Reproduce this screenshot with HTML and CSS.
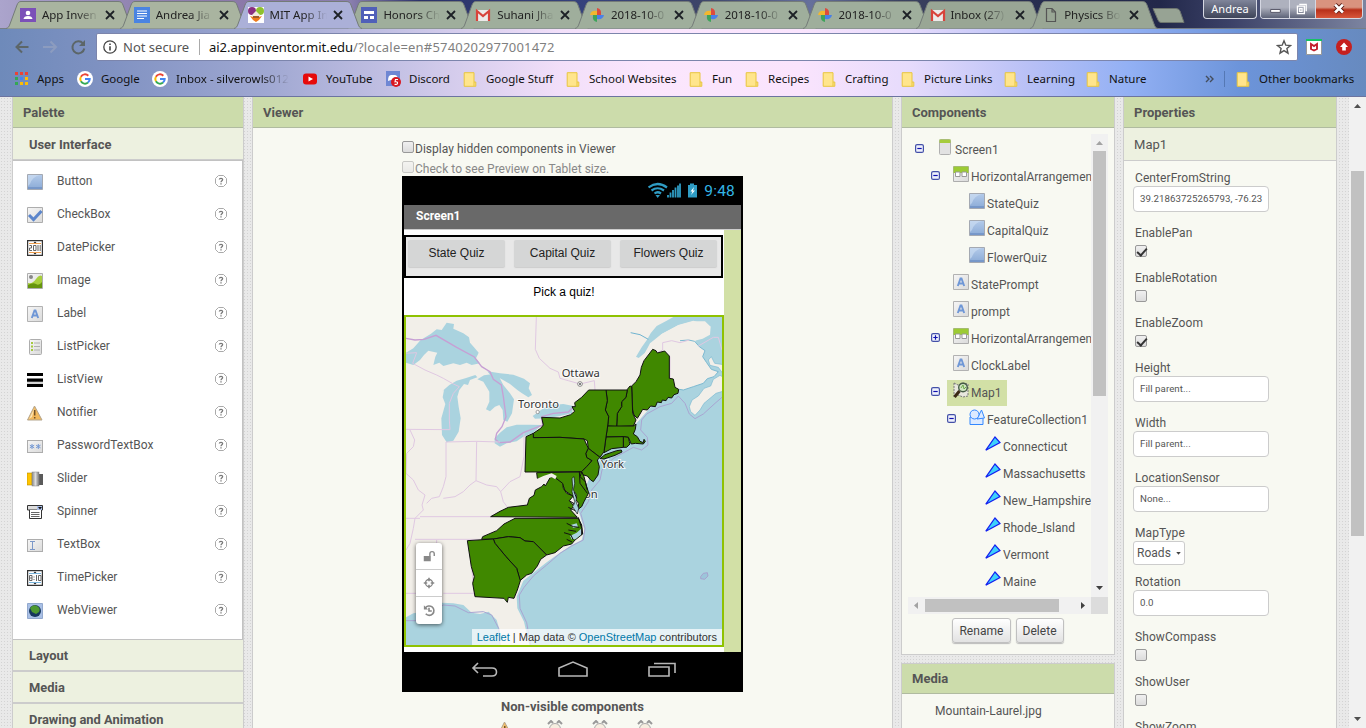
FILE: index.html
```html
<!DOCTYPE html>
<html lang="en">
<head>
<meta charset="utf-8">
<title>MIT App Inventor</title>
<link rel="stylesheet" href="styles.css">
</head>
<body>
<svg class="defs" width="0" height="0">
  <defs>
    <linearGradient id="gBlue" x1="0" y1="0" x2="0" y2="1"><stop offset="0" stop-color="#b4cbea"/><stop offset="1" stop-color="#8aaad6"/></linearGradient>
    <linearGradient id="gGray" x1="0" y1="0" x2="1" y2="1"><stop offset="0" stop-color="#f6f6f6"/><stop offset="1" stop-color="#dadada"/></linearGradient>
    <linearGradient id="gSteel"><stop offset="0" stop-color="#888"/><stop offset=".5" stop-color="#ddd"/><stop offset="1" stop-color="#777"/></linearGradient>
  </defs>
  <symbol id="tab" viewBox="0 0 128 28"><path d="M0 27.5C2 27 3 26 4 23L11 4C12 1.500 13 .5 15 .5H112C115 .5 116 1.500 117 4L124 23C125 26 126 27 128 27.500Z" fill="currentColor"/><path d="M0 27.5C2 27 3 26 4 23L11 4C12 1.500 13 .5 15 .5H112C115 .5 116 1.500 117 4L124 23C125 26 126 27 128 27.500" fill="none" stroke="#747b78"/></symbol>
  <symbol id="x" viewBox="0 0 10 10"><path d="M1 1L9 9M9 1L1 9" stroke="#1d2126" stroke-width="1.800" fill="none"/></symbol>
  <symbol id="gmail" viewBox="0 0 16 16"><path d="M1 3H15V14H1Z" fill="#eceaea"/><path d="M2 14V4L8 9L14 4V14" fill="none" stroke="#d8433b" stroke-width="2.200"/></symbol>
  <symbol id="photos" viewBox="0 0 16 16"><path d="M8 8V1Q13 2 12 8Z" fill="#dc4b3e"/><path d="M8 8H15Q14 13 8 12Z" fill="#4a80e8"/><path d="M8 8V15Q3 14 4 8Z" fill="#3fa35b"/><path d="M8 8H1Q2 3 8 4Z" fill="#f3b72f"/></symbol>
  <symbol id="google" viewBox="0 0 16 16"><circle cx="8" cy="8" r="8" fill="#fff"/><path d="M11.300 4.700A4.700 4.700 0 0 0 3.900 5.700" stroke="#ea4335" stroke-width="2" fill="none"/><path d="M3.900 5.700A4.700 4.700 0 0 0 3.900 10.300" stroke="#fbbc05" stroke-width="2" fill="none"/><path d="M3.900 10.300A4.700 4.700 0 0 0 11 11.600" stroke="#34a853" stroke-width="2" fill="none"/><path d="M11 11.600A4.700 4.700 0 0 0 12.700 8H8" stroke="#4285f4" stroke-width="2" fill="none"/></symbol>
  <symbol id="folder" viewBox="0 0 13 15"><path d="M.7.7H10.500V10H12.300V14.300H.7Z" fill="#ffe58c" stroke="#e8c63f"/><path d="M10.500 10V14" stroke="#e8c63f"/></symbol>
  <symbol id="help" viewBox="0 0 12 12"><path d="M3.500.5H8.500L11.500 3.500V8.500L8.500 11.500H3.500L.5 8.500V3.500Z" fill="#fff" stroke="#aaa"/><path d="M4.300 4.500C4.500 2.800 7.800 2.900 7.600 4.700C7.500 5.700 6 5.800 6 7.200M6 8.200V9.500" fill="none" stroke="#777" stroke-width="1.300"/></symbol>
  <symbol id="button" viewBox="0 0 16 16"><path d="M.5.5H15.500V15.500H.5Z" fill="url(#gBlue)" stroke="#a4a9b2"/><path d="M1 1H13Q5 3 3 10L1 12Z" fill="#cfdff3" opacity=".6"/><path d="M1 14H15" stroke="#6f90c4" stroke-width="1.500"/></symbol>
  <symbol id="checkbox" viewBox="0 0 16 16"><path d="M.5.5H15.500V15.500H.5Z" fill="url(#gGray)" stroke="#adadad"/><path d="M2 8L6.500 12.500L14.500 4" fill="none" stroke="#5b85cb" stroke-width="3"/></symbol>
  <symbol id="datepicker" viewBox="0 0 16 16"><path d="M.6.6H15.400V15.400H.6Z" fill="#fff" stroke="#333" stroke-width="1.200"/><path d="M2 3.500H14M2 12.500H14" stroke="#f0a050"/><path d="M6.500 3L8 1.500L9.500 3ZM6.500 13L8 14.500L9.500 13Z" fill="#222"/><path d="M2.500 5.500H4.500V8H2.500V10.500H5M6.500 5.500H9V10.500H6.500ZM11 5V11M13.200 5V11" fill="none" stroke="#666"/></symbol>
  <symbol id="timepicker" viewBox="0 0 16 16"><path d="M.6.6H15.400V15.400H.6Z" fill="#fff" stroke="#333" stroke-width="1.200"/><path d="M2 3.500H14M2 12.500H14" stroke="#79b4dc"/><path d="M6.500 3L8 1.500L9.500 3ZM6.500 13L8 14.500L9.500 13Z" fill="#222"/><path d="M2.500 5.500H5V10.500H2.500ZM2.500 8H5M7 6.500V7.500M7 9V10M9.500 5V11M11.500 5.500H14V10.500H11.500Z" fill="none" stroke="#666"/></symbol>
  <symbol id="image" viewBox="0 0 16 16"><path d="M.5.5H15.500V15.500H.5Z" fill="url(#gGray)" stroke="#adadad"/><path d="M1 10Q6 11 9 6T15 3V15H1Z" fill="#a8cf3d"/><path d="M1 12Q6 9 9 11T15 9V15H1Z" fill="#66950e"/><circle cx="4" cy="4" r="2" fill="#888"/></symbol>
  <symbol id="label" viewBox="0 0 16 16"><path d="M.5.5H15.500V15.500H.5Z" fill="url(#gGray)" stroke="#b2b2b2"/><path d="M4.800 12L7.500 4.500H8.500L11.200 12M6 9.500H10" fill="none" stroke="#6f97d6" stroke-width="1.900"/></symbol>
  <symbol id="listpicker" viewBox="0 0 16 16"><rect x="2.500" y=".5" width="12" height="15" rx="1" fill="url(#gGray)" stroke="#adadad"/><path d="M4 4H6M4 7.500H6M4 11H6" stroke="#a5c840" stroke-width="2"/><path d="M7 4H13M7 7.500H13M7 11H13" stroke="#b0b0b0"/></symbol>
  <symbol id="listview" viewBox="0 0 16 16"><path d="M0 2.500H16M0 8.200H16M0 13.500H16" stroke="#000" stroke-width="3.200"/><path d="M0 11H16" stroke="#aaa"/></symbol>
  <symbol id="notifier" viewBox="0 0 16 16"><path d="M7.500 1L15 15H.5Z" fill="#f2b95d" stroke="#b4a58d"/><path d="M7.500 3L5 12L2 14Z" fill="#fce5b5"/><path d="M7.700 5V10.500M7.700 12V13.500" stroke="#715126" stroke-width="1.500"/></symbol>
  <symbol id="password" viewBox="0 0 16 16"><rect x=".5" y="2.500" width="15" height="12" fill="url(#gGray)" stroke="#adadad"/><path d="M5 6V11M2.800 7.200L7.200 9.800M7.200 7.200L2.800 9.800M11.300 6V11M9.100 7.200L13.500 9.800M13.500 7.200L9.100 9.800" stroke="#7398d4"/></symbol>
  <symbol id="slider" viewBox="0 0 16 16"><path d="M0 2H5V14H0Z" fill="#ffc400" stroke="#b38a00" stroke-width=".6"/><path d="M11 3H16V14H11Z" fill="#5a5a5a"/><rect x="5" y="1" width="7" height="14" fill="url(#gSteel)" stroke="#888" stroke-width=".5"/></symbol>
  <symbol id="spinner" viewBox="0 0 16 16"><path d="M.5 1.500H15.500V6H.5Z" fill="#ddd" stroke="#333"/><path d="M10 2H15V6H10Z" fill="#a9bde6"/><path d="M11 3H15L13 5.500Z" fill="#111"/><path d="M2.500 6V14.500H14.500V6" fill="#fff" stroke="#333"/><path d="M4 8.500H12.500M4 10.500H12.500M4 12.500H12.500" stroke="#666"/></symbol>
  <symbol id="textbox" viewBox="0 0 16 16"><rect x=".5" y="2.500" width="15" height="12" fill="url(#gGray)" stroke="#adadad"/><path d="M3 4.500H8M3 12.500H8M5.500 4.500V12.500" stroke="#7c98c8" fill="none"/></symbol>
  <symbol id="web" viewBox="0 0 16 16"><path d="M.5.5H15.500V15.500H.5Z" fill="#a9c0e6" stroke="#93a9ce"/><circle cx="8" cy="8" r="6" fill="#17365e"/><path d="M3 5Q6 1 10 3Q14 5 12 9L9 11L5 9Z" fill="#4e9a31"/></symbol>
  <symbol id="screen" viewBox="0 0 16 16"><rect x="2.500" y=".5" width="11" height="15" rx="1" fill="#e2e2e2" stroke="#b0b0b0"/><path d="M2.500.5H13.500V4H2.500Z" fill="#a5cc3c"/></symbol>
  <symbol id="horiz" viewBox="0 0 16 16"><path d="M.5.5H15.500V15.500H.5Z" fill="url(#gGray)" stroke="#adadad"/><path d="M.5.5H15.500V7H.5Z" fill="#9ccb34"/><path d="M2.500 6H7V10.500H2.500ZM9 6H13.500V10.500H9Z" fill="#fff" stroke="#999"/></symbol>
  <symbol id="map" viewBox="0 0 16 16"><path d="M1 1L5 3L10 1L15 2V14L10 15L5 13L1 15Z" fill="#e8e8de" stroke="#777" stroke-dasharray="2 1"/><circle cx="10" cy="5.500" r="4.300" fill="#cfe5c0" stroke="#455b45" stroke-width="1.400"/><path d="M6.500 9L1.500 15" stroke="#3b2a14" stroke-width="3"/><path d="M8 6L10 3L11 7L13 5" fill="none" stroke="#6daa4a"/></symbol>
  <symbol id="features" viewBox="0 0 16 16"><path d="M1 8H14V15.500H1Z" fill="#dceaff" stroke="#3388ff"/><path d="M8 10L12.500 1L15.500 9Z" fill="#dceaff" stroke="#3388ff"/><circle cx="5.500" cy="5.500" r="4.500" fill="#dceaff" stroke="#3388ff"/></symbol>
  <symbol id="poly" viewBox="0 0 16 16"><path d="M.8 14.200L10 1L15 6.500Z" fill="#3dd0fb" stroke="#1420f0" stroke-width="1.200"/></symbol>
  <symbol id="minus" viewBox="0 0 9 9"><rect x=".6" y=".6" width="7.800" height="7.800" rx="1.500" fill="#eef1fc" stroke="#4450a8" stroke-width="1.200"/><path d="M2.300 4.500H6.700" stroke="#1010b0" stroke-width="1.200"/></symbol>
  <symbol id="plus" viewBox="0 0 9 9"><rect x=".6" y=".6" width="7.800" height="7.800" rx="1.500" fill="#eef1fc" stroke="#4450a8" stroke-width="1.200"/><path d="M2.300 4.500H6.700M4.500 2.300V6.700" stroke="#1010b0" stroke-width="1.200"/></symbol>
  <symbol id="clock" viewBox="0 0 16 16"><path d="M1 4L4 1L6 3M15 4L12 1L10 3" stroke="#999" stroke-width="2" fill="none"/><circle cx="8" cy="9" r="5.500" fill="#f6eee0" stroke="#aaa"/></symbol>
</svg>

<header class="chrome">
  <div class="strip">
    <div class="tabs">
      <div class="tab"><svg class="shape"><use href="#tab"/></svg><svg class="fav" viewBox="0 0 16 16"><path d="M0 1H16V15H0Z" fill="#7b50b8"/><circle cx="8" cy="6" r="2.300" fill="#fff"/><path d="M3.500 12Q4 9 8 9T12.500 12Z" fill="#fff"/></svg><span>App Inven</span><svg class="x"><use href="#x"/></svg></div>
      <div class="tab"><svg class="shape"><use href="#tab"/></svg><svg class="fav" viewBox="0 0 16 16"><path d="M0 0H16V16H0Z" fill="#4a84e2"/><path d="M3 4H13M3 6.500H13M3 9H13M3 11.500H10" stroke="#fff"/></svg><span>Andrea Jia</span><svg class="x"><use href="#x"/></svg></div>
      <div class="tab active"><svg class="shape"><use href="#tab"/></svg><svg class="fav" viewBox="0 0 16 16"><path d="M0 0H16V16H0Z" fill="#fff"/><circle cx="4" cy="4" r="4" fill="#8a2f80"/><circle cx="12" cy="4" r="4" fill="#8fc12f"/><path d="M4 8L8 4L12 8V12H4Z" fill="#f2e9dd"/><path d="M2 9L5 10H11L14 9L11 13L8 15L5 13Z" fill="#ef7a1c"/><path d="M5 9H11V11H5Z" fill="#a05a2a"/></svg><span>MIT App In</span><svg class="x"><use href="#x"/></svg></div>
      <div class="tab"><svg class="shape"><use href="#tab"/></svg><svg class="fav" viewBox="0 0 16 16"><path d="M0 0H16V16H0Z" fill="#5060b8"/><path d="M3 4H13V7H3ZM3 9H7V12H3ZM9 9H13V12H9Z" fill="#fff"/></svg><span>Honors Ch</span><svg class="x"><use href="#x"/></svg></div>
      <div class="tab"><svg class="shape"><use href="#tab"/></svg><svg class="fav"><use href="#gmail"/></svg><span>Suhani Jha</span><svg class="x"><use href="#x"/></svg></div>
      <div class="tab"><svg class="shape"><use href="#tab"/></svg><svg class="fav"><use href="#photos"/></svg><span>2018-10-0</span><svg class="x"><use href="#x"/></svg></div>
      <div class="tab"><svg class="shape"><use href="#tab"/></svg><svg class="fav"><use href="#photos"/></svg><span>2018-10-0</span><svg class="x"><use href="#x"/></svg></div>
      <div class="tab"><svg class="shape"><use href="#tab"/></svg><svg class="fav"><use href="#photos"/></svg><span>2018-10-0</span><svg class="x"><use href="#x"/></svg></div>
      <div class="tab"><svg class="shape"><use href="#tab"/></svg><svg class="fav"><use href="#gmail"/></svg><span class="tight">Inbox (27)</span><svg class="x"><use href="#x"/></svg></div>
      <div class="tab"><svg class="shape"><use href="#tab"/></svg><svg class="fav" viewBox="0 0 16 16"><path d="M2.500 1.500H8L11.500 5V14.500H2.500ZM8 1.500V5H11.500" fill="none" stroke="#555" stroke-width="1.200"/></svg><span class="tight">Physics Bo</span><svg class="x"><use href="#x"/></svg></div>
    </div>
    <svg class="newtab" viewBox="0 0 34 17"><path d="M1 1.500H24Q27 1.500 28 4L32 15.500H9Q7 15.500 6 13Z" fill="#97a394" stroke="#6d756f"/></svg>
    <div class="user">Andrea</div>
    <div class="winbtns">
      <svg class="wb" viewBox="0 0 29 17"><path d="M10 9H20V12H10Z" fill="#fff" stroke="#556"/></svg>
      <svg class="wb mid" viewBox="0 0 27 17"><path d="M10 3.500H17.500V11M8 5.500H15.500V13.500H8ZM10.500 8H13V11H10.500Z" fill="none" stroke="#fff" stroke-width="1.400"/></svg>
      <svg class="wb close" viewBox="0 0 47 17"><path d="M19.500 4L27.500 12M27.500 4L19.500 12" stroke="#5b1b14" stroke-width="4.500"/><path d="M19.500 4L27.500 12M27.500 4L19.500 12" stroke="#fff" stroke-width="2.800"/></svg>
    </div>
  </div>
  <div class="toolbar">
    <svg class="nav" viewBox="0 0 76 20"><g fill="none" stroke-width="2"><path d="M14.500 10H2.500M8 4.500L2.500 10L8 15.500" stroke="#5c6668"/><path d="M29 10H42M36.500 4.500L42 10L36.500 15.500" stroke="#8c9cbf"/><path d="M69 6.500A6 6 0 1 0 70.300 11.500" stroke="#5c6668"/></g><path d="M71 3V9H65Z" fill="#5c6668"/></svg>
    <div class="omni">
      <svg class="info" viewBox="0 0 14 14"><circle cx="7" cy="7" r="6.200" fill="none" stroke="#444" stroke-width="1.300"/><path d="M7 6.200V10.500M7 3.500V5" stroke="#444" stroke-width="1.600"/></svg>
      <span class="sec">Not secure</span><i></i><span class="url">ai2.appinventor.mit.edu<em>/?locale=en#5740202977001472</em></span>
      <svg class="star" viewBox="0 0 16 16"><path d="M8 1.800L9.800 6.200L14.500 6.500L10.900 9.500L12 14.200L8 11.600L4 14.200L5.100 9.500L1.500 6.500L6.200 6.200Z" fill="none" stroke="#555" stroke-width="1.400"/></svg>
    </div>
    <svg class="ext" viewBox="0 0 16 16"><path d="M.5.5H15.500V15.500H.5Z" fill="#fff" stroke="#999"/><path d="M0 0H16V2H0Z" fill="#16c264"/><path d="M5 5L8 7L11 5V10L8 11.500L5 10Z" fill="none" stroke="#c3202c" stroke-width="1.900"/></svg>
    <svg class="ext up" viewBox="0 0 16 16"><circle cx="8" cy="8" r="8" fill="#c6201e"/><path d="M8 3.500L12 8H9.800V11.500H6.200V8H4Z" fill="#fff"/></svg>
  </div>
  <nav class="marks">
    <a style="left:14px"><svg viewBox="0 0 16 16"><path d="M1 1h3v3H1zM6 1h3v3H6zM11 1h3v3h-3z" fill="#ea4335"/><path d="M1 6h3v3H1z" fill="#34a853"/><path d="M6 6h3v3H6z" fill="#4285f4"/><path d="M11 6h3v3h-3zM6 11h3v3H6zM11 11h3v3h-3z" fill="#fbbc05"/><path d="M1 11h3v3H1z" fill="#34a853"/></svg>Apps</a>
    <a class="g" style="left:77px"><svg><use href="#google"/></svg>Google</a>
    <a class="g cut" style="left:152px"><svg><use href="#google"/></svg>Inbox - silverowls012</a>
    <a class="g" style="left:302px"><svg viewBox="0 0 16 16"><rect x="1" y="2.500" width="14" height="11" rx="3" fill="#e60a0a"/><path d="M6.500 5.500L11 8L6.500 10.500Z" fill="#fff"/></svg>YouTube</a>
    <a class="g" style="left:385px"><svg viewBox="0 0 16 16"><path d="M1 0H15V15H1Z" fill="#6f87d3"/><path d="M3 10Q3 4 6 4H10Q13 4 13 10L10 9H6Z" fill="#fff"/><circle cx="11" cy="11" r="5" fill="#d8171f"/><path d="M13 8.500H10.500L10 10.800Q13 10.500 12.500 12.500Q12 13.800 9.500 13.200" fill="none" stroke="#fff" stroke-width="1.100"/></svg>Discord</a>
    <a style="left:463px"><svg class="fo"><use href="#folder"/></svg>Google Stuff</a>
    <a style="left:566px"><svg class="fo"><use href="#folder"/></svg>School Websites</a>
    <a style="left:689px"><svg class="fo"><use href="#folder"/></svg>Fun</a>
    <a style="left:745px"><svg class="fo"><use href="#folder"/></svg>Recipes</a>
    <a style="left:822px"><svg class="fo"><use href="#folder"/></svg>Crafting</a>
    <a style="left:901px"><svg class="fo"><use href="#folder"/></svg>Picture Links</a>
    <a style="left:1004px"><svg class="fo"><use href="#folder"/></svg>Learning</a>
    <a style="left:1086px"><svg class="fo"><use href="#folder"/></svg>Nature</a>
    <a style="left:1205px"><svg class="chev" viewBox="0 0 9 8"><path d="M1 1L4 4L1 7M5 1L8 4L5 7" fill="none" stroke="#444d5c" stroke-width="1.400"/></svg></a>
    <a class="sep" style="left:1224px"></a>
    <a style="left:1236px"><svg class="fo"><use href="#folder"/></svg>Other bookmarks</a>
  </nav>
</header>

<main class="work">
  <section class="panel palette">
    <h2>Palette</h2>
    <h3 class="open">User Interface</h3>
    <ul class="items">
      <li><svg class="i"><use href="#button"/></svg>Button<svg class="q"><use href="#help"/></svg></li>
      <li><svg class="i"><use href="#checkbox"/></svg>CheckBox<svg class="q"><use href="#help"/></svg></li>
      <li><svg class="i"><use href="#datepicker"/></svg>DatePicker<svg class="q"><use href="#help"/></svg></li>
      <li><svg class="i"><use href="#image"/></svg>Image<svg class="q"><use href="#help"/></svg></li>
      <li><svg class="i"><use href="#label"/></svg>Label<svg class="q"><use href="#help"/></svg></li>
      <li><svg class="i"><use href="#listpicker"/></svg>ListPicker<svg class="q"><use href="#help"/></svg></li>
      <li><svg class="i"><use href="#listview"/></svg>ListView<svg class="q"><use href="#help"/></svg></li>
      <li><svg class="i"><use href="#notifier"/></svg>Notifier<svg class="q"><use href="#help"/></svg></li>
      <li><svg class="i"><use href="#password"/></svg>PasswordTextBox<svg class="q"><use href="#help"/></svg></li>
      <li><svg class="i"><use href="#slider"/></svg>Slider<svg class="q"><use href="#help"/></svg></li>
      <li><svg class="i"><use href="#spinner"/></svg>Spinner<svg class="q"><use href="#help"/></svg></li>
      <li><svg class="i"><use href="#textbox"/></svg>TextBox<svg class="q"><use href="#help"/></svg></li>
      <li><svg class="i"><use href="#timepicker"/></svg>TimePicker<svg class="q"><use href="#help"/></svg></li>
      <li><svg class="i"><use href="#web"/></svg>WebViewer<svg class="q"><use href="#help"/></svg></li>
    </ul>
    <h3>Layout</h3>
    <h3>Media</h3>
    <h3>Drawing and Animation</h3>
  </section>

  <section class="panel viewer">
    <h2>Viewer</h2>
    <div class="stage">
      <div class="opt"><b class="cb"></b>Display hidden components in Viewer</div>
      <div class="opt off"><b class="cb"></b>Check to see Preview on Tablet size.</div>
      <div class="phone">
        <div class="status">
          <svg width="50" height="18" viewBox="0 0 50 18"><g fill="none" stroke="#2f9cc4" stroke-width="2.200"><path d="M.5 5.500Q9.500-1.500 19 5.500M3.500 8.500Q9.500 4 16 8.500M6.500 11.500Q9.500 9 13 11.500"/></g><path d="M7.500 13L9.700 16L12 13Z" fill="#2f9cc4"/><path d="M20 15.500V13M22.500 15.500V10.500M25 15.500V8M27.500 15.500V5.500M30 15.500V3.500M32 15.500V1.500" stroke="#2f9cc4" stroke-width="1.800"/><path d="M40 3H42V1.500H46V3H49V15.500H40Z" fill="#2f9cc4"/><path d="M46 5L42.500 9.500H44.500L43 13L47 8.500H45Z" fill="#fff"/></svg>
          <span>9:48</span>
        </div>
        <div class="title">Screen1</div>
        <div class="body">
          <div class="form">
            <div class="harr"><span>State Quiz</span><span>Capital Quiz</span><span>Flowers Quiz</span></div>
            <div class="pick">Pick a quiz!</div>
            <div class="map">
              <svg class="geo" viewBox="18 21 948 984">
                <path d="M18 21H966V1005H18Z" fill="#f2efe9"/>
                <g fill="#aad3df">
                  <path d="M18 128L40 115L62 90L92 72L110 58L125 60L140 38L162 42L160 56L190 70L207 82L210 98L222 112L236 128L228 145L240 160L215 165L200 158L180 165L160 160L130 168L118 158L100 165L106 140L112 128L85 122L72 135L60 150L40 165L18 158Z"/>
                  <path d="M148 225L170 212L196 205L226 195L232 202L210 210L204 225L192 222L178 240L172 260L176 290L182 325L176 365L160 392L140 397L126 375L124 325L136 282L128 262L132 240L125 245Z"/>
                  <path d="M232 208L252 196L280 192L298 202L310 225L330 250L342 268L336 310L322 335L310 330L308 300L298 285L285 290L270 304L258 298L268 275L268 245L250 215Z"/>
                  <path d="M262 184L300 190L340 194L372 206L390 220L386 235L396 255L385 262L366 250L352 240L330 222L300 205L275 200Z"/>
                  <path d="M284 385L300 368L320 352L350 344L390 344L425 345L400 368L370 380L350 394L320 400L300 410L284 400Z"/>
                  <path d="M398 318L412 308L430 295L450 286L490 282L520 288L516 310L480 318L440 325L405 326Z"/>
                  <path d="M708 140L725 112L742 88L752 70L770 48L800 32L820 21H966V1005H388L372 935L352 895L350 860L370 812L440 757L480 728L515 705L545 690L553 660L535 600L545 560L570 500L590 450L620 420L700 350L780 260L834 236L870 200L908 140L884 94L932 50L880 32L835 45L785 72L755 100L735 128L716 144Z"/>
                  <path d="M18 922L40 910L70 905L100 892L125 878L160 880L190 885L215 908L240 912L266 905L290 930L300 965L298 1005H18Z"/>
                </g>
                <path d="M735 128L750 100L785 72L835 46L880 34L915 34L932 50L930 74L908 86L884 92L898 110L915 122L908 140L920 158L934 178L955 185L942 200L922 206L910 220L880 230L850 240L834 236L780 230L720 200Z" fill="#f2efe9"/>
                <g fill="#f2efe9" stroke="#7cb9d1" stroke-width="2">
                  <path d="M868 290L876 270L895 258L912 235L932 228L940 208L960 196L975 204V242L948 250L930 265L912 280L900 300L885 316L872 305Z"/>
                  <path d="M925 150L934 140L944 160L972 164V195L955 172L930 166Z"/>
                </g>
                <path d="M840 92L866 90L884 94L898 110L915 122L908 140L920 158L934 178L955 185L942 200L922 206L910 220L880 230L850 240L838 238" fill="none" stroke="#7cb9d1" stroke-width="3"/>
                <path d="M692 68L720 74L745 88" fill="none" stroke="#6fb3d0" stroke-width="3"/>
                <g fill="none" stroke="#a9a5d2" stroke-width="3">
                  <path d="M966 262L945 280L910 312L885 326L868 312L855 280L835 258L815 280L780 290L740 312L725 330L722 360L742 382L744 405L725 420L700 412L640 445L606 480L600 510L575 540L565 575L542 610L555 655L550 690L515 708L480 730L440 765L400 798L372 832L358 855L360 895L380 938L392 1005"/>
                  <path d="M18 932L50 932L90 908L130 885L165 888L205 908L250 905L275 915L296 955L300 1005"/>
                </g>
                <path d="M18 85L45 90L72 88L108 76L170 112L222 140L245 170L270 185L280 208L304 225L310 260L318 320L306 350L290 370L286 388L298 398L330 396L370 368L428 345L425 320L460 310L505 306L520 290" fill="none" stroke="#c79fd4" stroke-width="4"/>
                <g fill="none" stroke="#e0c8e2" stroke-width="3">
                  <path d="M409 21L406 118L418 145L450 175L475 186L480 205L505 212L540 222L583 212L585 240"/>
                  <path d="M18 358L150 359L148 330L148 280L160 250L178 230L160 222L130 205L110 195L75 180L38 160L50 128L18 130"/>
                  <path d="M30 360L44 390L40 410L20 430L18 490L40 510L55 540L75 555L66 585L70 600L45 625L40 655L30 700L18 720"/>
                  <path d="M138 396V500L130 530L118 560L95 565L80 580"/>
                  <path d="M138 396L230 394L300 396M230 394L228 512L210 525L190 545L165 560L130 565M228 512L260 525L290 530L302 545L330 515L360 500L372 440V370M302 545L310 575L325 595L272 620"/>
                  <path d="M18 625H60M60 620H280M45 688H245M110 690L105 850L110 875M18 850H100M130 850H222L225 860M205 692L225 860"/>
                  <path d="M772 128L788 120L788 98L815 92L840 98L868 90M895 108L940 82L955 82L966 120M810 140V205"/>
                </g>
                <path d="M902 800L910 790L922 788L924 798L914 808L902 806Z" fill="#9cc6da" stroke="#a79acb" stroke-width="2.500"/>
                <g class="maplabel">
                  <text x="485" y="202">Ottawa</text><text x="354" y="294">Toronto</text><text x="603" y="475">York</text><text x="552" y="564">on</text>
                </g>
                <circle cx="540" cy="222" r="7" fill="#fff" stroke="#555" stroke-width="2"/><circle cx="540" cy="222" r="3" fill="#555"/>
                <circle cx="413" cy="306" r="5" fill="#fff" stroke="#777" stroke-width="2"/>
                <g fill="#408800" stroke="#111" stroke-width="3" stroke-linejoin="round">
                  <path d="M758 118L768 122L772 129L794 123L808 138V205L820 207L825 232L836 238L834 250L822 254L815 264L804 262L798 272L787 270L784 278L772 276L766 290L752 288L742 300L728 298L720 312L712 325L702 315L698 300L695 228L708 215L720 195L724 172L732 152Z"/>
                  <path d="M682 238L690 228L695 230L698 310L708 330L700 348L650 350L652 310L665 290V275L678 262Z"/>
                  <path d="M618 240H682L678 262L665 275V290L652 310L650 350L623 348L626 320L616 300L622 272Z"/>
                  <path d="M623 348L700 348L708 342L706 358L700 372L712 380L720 394L730 398L732 388L736 394L730 402L706 400L694 402L685 382L670 380L618 381Z"/>
                  <path d="M670 380L685 382L688 395L690 402L680 412H670Z"/>
                  <path d="M618 381L670 380V412L635 416L612 428Z"/>
                  <path d="M566 240H618L622 272L616 300L626 320L623 348L618 381L612 425L600 442L565 415L562 392L552 387L480 382L400 383L400 370L422 355L430 345L425 322L480 324L512 314L524 304L516 290L526 290L524 278L545 262Z"/>
                  <path d="M600 446L615 434L650 422L664 420L666 426L645 436L612 447Z"/>
                  <path d="M378 380L400 370V383L480 382L552 387L565 415L558 430L560 442L576 452L560 470L545 485L375 486Z"/>
                  <path d="M565 415L600 442L592 450L598 470L594 495L580 515L572 510L562 498L550 495L545 485L560 470L576 452L560 442L558 430Z"/>
                  <path d="M410 488L545 486L552 500L560 530L566 548L560 560L552 575L545 590L534 598L536 580L520 560L495 542L488 522L465 508L440 500L425 506L412 505Z"/>
                  <path d="M538 484L540 520L562 550M545 486L540 500" fill="none"/>
                  <path d="M272 620L300 604L325 592L382 585L388 565L402 556L406 540L425 530L432 522L436 528L452 500L468 505L488 520L490 535L500 550L520 558L508 572L522 588L512 600L532 622Z"/>
                  <path d="M245 688L248 680L290 662L312 642L345 625H535L545 645L548 672L525 690L515 702L490 708L465 728L440 735L400 695L375 693L360 683L325 680L280 687Z"/>
                  <path d="M280 687L325 680L360 683L375 693L400 695L440 735L422 748L412 768L395 790L380 795L360 812L350 775L318 740L285 700Z"/>
                  <path d="M202 692L280 687L285 700L318 740L350 775L361 812L352 840L342 865L325 862L322 877L312 865L225 860L218 820L223 800L214 770Z"/>
                </g>
                <path d="M448 492L455 490L470 498L466 508L455 502L440 506L420 512L412 506L430 498Z" fill="#f2efe9"/>
                <path d="M516 505L522 500L524 520L520 540L530 555L528 575L536 595L532 612L524 600L518 590L524 575L516 545L518 530Z" fill="#aad3df" stroke="#111" stroke-width="2"/>
                <path d="M508 572L524 582M505 592L526 602M540 500L556 515L562 540M522 545L530 565" stroke="#111" stroke-width="3" fill="none"/>
                <path d="M510 678L530 668L545 655L546 672L526 688L515 688ZM512 645L530 640L534 650L520 654Z" fill="#aad3df"/>
                <path d="M500 640L520 650L538 652M492 668L512 674L520 690M500 688L516 696M505 660L528 664M535 622L545 655V675" stroke="#111" stroke-width="3" fill="none"/>
              </svg>
              <div class="ctl">
                <svg viewBox="0 0 16 16"><path d="M2 8H10V14H2Z" fill="#888"/><path d="M9 8V5.500Q9 3 11.500 3T14 5.500V8" fill="none" stroke="#888" stroke-width="1.600"/></svg>
                <svg viewBox="0 0 16 16"><circle cx="8" cy="8" r="4" fill="none" stroke="#888" stroke-width="1.500"/><path d="M8 2V6M8 10V14M2 8H6M10 8H14" stroke="#888" stroke-width="1.800"/></svg>
                <svg viewBox="0 0 16 16"><path d="M4 5.500A5 5 0 1 1 4.500 11.500M8 5V8.500H11" fill="none" stroke="#888" stroke-width="1.700"/><path d="M2.500 2.500V7H7Z" fill="#888"/></svg>
              </div>
              <div class="attr"><a>Leaflet</a> | Map data © <a>OpenStreetMap</a> contributors</div>
            </div>
          </div>
        </div>
        <svg class="softkeys" viewBox="0 0 341 40"><g fill="none" stroke="#b8b8b8" stroke-width="1.600"><path d="M76 11L71 16L76 21M71 16H90Q94.500 16 94.500 20T90 24H81"/><path d="M157 24V16L171 10L185 16V24Z"/><path d="M247 15H267V24H247ZM252 11.500H273V21"/></g></svg>
      </div>
      <div class="nonvis">Non-visible components</div>
      <div class="nv"><svg><use href="#notifier"/></svg><svg><use href="#clock"/></svg><svg><use href="#clock"/></svg><svg><use href="#clock"/></svg></div>
    </div>
  </section>

  <div class="col">
    <section class="panel comps">
      <h2>Components</h2>
      <div class="treebox">
        <ul class="tree">
          <li class="d0"><svg class="e"><use href="#minus"/></svg><span><svg class="i"><use href="#screen"/></svg>Screen1</span></li>
          <li class="d1"><svg class="e"><use href="#minus"/></svg><span><svg class="i"><use href="#horiz"/></svg>HorizontalArrangement1</span></li>
          <li class="d2"><svg class="e"></svg><span><svg class="i"><use href="#button"/></svg>StateQuiz</span></li>
          <li class="d2"><svg class="e"></svg><span><svg class="i"><use href="#button"/></svg>CapitalQuiz</span></li>
          <li class="d2"><svg class="e"></svg><span><svg class="i"><use href="#button"/></svg>FlowerQuiz</span></li>
          <li class="d1"><svg class="e"></svg><span><svg class="i"><use href="#label"/></svg>StatePrompt</span></li>
          <li class="d1"><svg class="e"></svg><span><svg class="i"><use href="#label"/></svg>prompt</span></li>
          <li class="d1"><svg class="e"><use href="#plus"/></svg><span><svg class="i"><use href="#horiz"/></svg>HorizontalArrangement2</span></li>
          <li class="d1"><svg class="e"></svg><span><svg class="i"><use href="#label"/></svg>ClockLabel</span></li>
          <li class="d1"><svg class="e"><use href="#minus"/></svg><span class="sel"><svg class="i"><use href="#map"/></svg>Map1</span></li>
          <li class="d2"><svg class="e"><use href="#minus"/></svg><span><svg class="i"><use href="#features"/></svg>FeatureCollection1</span></li>
          <li class="d3"><svg class="e"></svg><span><svg class="i"><use href="#poly"/></svg>Connecticut</span></li>
          <li class="d3"><svg class="e"></svg><span><svg class="i"><use href="#poly"/></svg>Massachusetts</span></li>
          <li class="d3"><svg class="e"></svg><span><svg class="i"><use href="#poly"/></svg>New_Hampshire</span></li>
          <li class="d3"><svg class="e"></svg><span><svg class="i"><use href="#poly"/></svg>Rhode_Island</span></li>
          <li class="d3"><svg class="e"></svg><span><svg class="i"><use href="#poly"/></svg>Vermont</span></li>
          <li class="d3"><svg class="e"></svg><span><svg class="i"><use href="#poly"/></svg>Maine</span></li>
        </ul>
        <svg class="vbar" viewBox="0 0 17 463"><path d="M5 11L8.500 7L12 11Z" fill="#a3a3a3"/><path d="M2 17H15V262H2Z" fill="#c1c1c1"/><path d="M5 452L8.500 456L12 452Z" fill="#404040"/></svg>
        <svg class="hbar" viewBox="0 0 183 17"><path d="M10 5L6 8.500L10 12Z" fill="#a3a3a3"/><path d="M17 2H151V15H17Z" fill="#c1c1c1"/><path d="M173 5L177 8.500L173 12Z" fill="#404040"/></svg>
        <div class="corner"></div>
      </div>
      <div class="btns"><button>Rename</button><button>Delete</button></div>
    </section>
    <section class="panel media">
      <h2>Media</h2>
      <p>Mountain-Laurel.jpg</p>
      <p>Purple_Lilac_Blend.jpg</p>
    </section>
  </div>

  <section class="panel props">
    <h2>Properties</h2>
    <div class="sub">Map1</div>
    <dl>
      <dt>CenterFromString</dt><dd class="t"><div>39.21863725265793, -76.23</div></dd>
      <dt>EnablePan</dt><dd class="c"><b class="cb on"></b></dd>
      <dt>EnableRotation</dt><dd class="c"><b class="cb"></b></dd>
      <dt>EnableZoom</dt><dd class="c"><b class="cb on"></b></dd>
      <dt>Height</dt><dd class="t"><div>Fill parent...</div></dd>
      <dt>Width</dt><dd class="t"><div>Fill parent...</div></dd>
      <dt>LocationSensor</dt><dd class="t"><div>None...</div></dd>
      <dt>MapType</dt><dd class="s"><div>Roads<svg width="5" height="3" viewBox="0 0 6 4"><path d="M0 0H6L3 3.500Z" fill="#444"/></svg></div></dd>
      <dt>Rotation</dt><dd class="t"><div>0.0</div></dd>
      <dt>ShowCompass</dt><dd class="c"><b class="cb"></b></dd>
      <dt>ShowUser</dt><dd class="c"><b class="cb"></b></dd>
      <dt>ShowZoom</dt>
    </dl>
  </section>
  <svg class="pagebar" viewBox="0 0 17 631"><path d="M0 0H17V631H0Z" fill="#f1f1f1"/><path d="M5 11L8.500 7L12 11Z" fill="#505050"/><path d="M2 74H15V439H2Z" fill="#c1c1c1"/><path d="M5 620L8.500 624L12 620Z" fill="#505050"/></svg>
</main>
</body>
</html>
```
FILE: styles.css
```css
* { box-sizing: border-box; }
html, body { height: 728px; overflow: hidden; }
body { margin: 0; width: 1366px; font: 12px/16px Roboto, sans-serif; letter-spacing: .03px; color: #555; background: #e8e8e8; }
ul, dl, dd, p, h2, h3 { margin: 0; padding: 0; list-style: none; }
svg { display: block; flex: none; }
.defs { position: absolute; }

/* browser chrome */
.chrome { height: 97px; border-bottom: 1px solid #6c74a0; font-family: "Noto Sans", "Open Sans", sans-serif; color: #111;
  background: linear-gradient(90deg, #6e8aba 0, #8092c2 110px, #a0a8d2 270px, #cbc6e8 420px, #f2dff9 560px, #fbe6fd 650px, #fae4fd 800px, #e6dbfc 910px, #b8c0f6 1030px, #92b0f4 1130px, #6c94da 1240px, #678abf 1366px); }
.strip { height: 29px; display: flex; padding: 1px 0 0 6px; border-bottom: 1px solid #777f86;
  background: linear-gradient(90deg, #aba4cc 0, #9285b2 130px, #8b78a8 250px, #8a7fae 350px, #2b3269 420px, #36437d 590px, #3d4568 700px, #66709c 810px, #3b4260 900px, #262c4e 1050px, #22284a 1160px, #3b4167 1230px, #7c84a0 1366px); }
.tabs { display: flex; width: 1146px; }
.tab { position: relative; width: 113.8px; flex: none; height: 28px; display: flex; align-items: center; padding-left: 14px; color: #9fae9c; }
.tab:nth-child(-n+2) { color: #a9b4a0; }
.tab:nth-child(n+9) { color: #99a695; }
.tab.active { color: #abb0d8; z-index: 2; }
.tab .shape { position: absolute; left: 0; top: 0; width: 128px; height: 28px; }
.tab .fav, .tab span, .tab .x { position: relative; }
.tab .fav { width: 16px; height: 16px; }
.tab span { width: 57px; margin: 0 6px 0 6px; white-space: nowrap; color: #222; font-size: 11.5px; letter-spacing: -.05px;
  -webkit-mask: linear-gradient(90deg, #000 60%, transparent); mask: linear-gradient(90deg, #000 60%, transparent); }
.tab .tight { margin-left: 4px; margin-right: 8px; }
.tab .x { width: 10px; height: 10px; }
.newtab { width: 34px; height: 17px; margin-top: 6px; }
.user { margin: -1px 0 0 17px; width: 54px; height: 19px; border: 1px solid #d5d7e2; border-top: 0; border-radius: 0 0 4px 4px; background: linear-gradient(#80859a, #3e4459); color: #fff; font-size: 11px; line-height: 18px; text-align: center; }
.winbtns { display: flex; margin: -1px 0 0 3px; height: 19px; border: 1px solid #d5d7e2; border-top: 0; border-radius: 0 0 4px 4px; overflow: hidden; }
.wb { height: 18px; width: 28px; background: linear-gradient(#aeb1be 0 40%, #5d6378); }
.wb.mid { width: 27px; border: solid #d5d7e2; border-width: 0 1px; }
.wb.close { width: 46px; background: linear-gradient(#d9937f 0 40%, #b8301a 55%, #d8563a); }
.toolbar { height: 36px; display: flex; align-items: center; padding-left: 14px; }
.nav { width: 76px; height: 20px; }
.omni { width: 1202px; height: 28px; margin-left: 6px; background: #fff; border: 1px solid #7c85ac; border-radius: 2px; display: flex; align-items: center; padding: 0 5px 0 6px; font-size: 13px; letter-spacing: 0; }
.info { width: 14px; height: 14px; margin-right: 6px; }
.sec { width: 67px; color: #555; white-space: nowrap; }
.omni i { width: 1px; height: 16px; background: #aaa; margin: 0 9px; }
.url { flex: 1; letter-spacing: -.03px; }
.url em { font-style: normal; color: #808080; letter-spacing: .2px; }
.star { width: 16px; height: 16px; }
.ext { width: 16px; height: 16px; margin-left: 8px; }
.ext.up { margin-left: 14px; }
.marks { position: relative; height: 30px; font-size: 11.5px; letter-spacing: 0; }
.marks a { position: absolute; top: 5px; display: flex; align-items: center; gap: 7px; height: 18px; white-space: nowrap; }
.marks .g { gap: 8px; }
.marks svg { width: 16px; height: 16px; }
.marks .fo { width: 14px; height: 15px; margin-right: 2px; }
.marks .chev { width: 9px; height: 8px; }
.marks .sep { width: 1px; height: 16px; top: 6px; background: #5578b4; }
.marks .cut { -webkit-mask: linear-gradient(90deg, #000 80%, transparent); mask: linear-gradient(90deg, #000 80%, transparent); }

/* workspace */
.work { height: 631px; display: flex; align-items: flex-start; padding-left: 12px; overflow: hidden;
  background-color: #e9e9e9; background-image: radial-gradient(#d3d3d3 .7px, transparent .9px); background-size: 3px 3px; }
.panel { background: #f8f9f2; border: 1px solid #ccc; border-top: 0; }
h2 { height: 31px; background: #ccdcab; border-bottom: 1px solid #b0bba0; font-size: 13px; font-weight: 700; line-height: 31px; padding-left: 10px; color: #555; letter-spacing: 0; }
.palette { width: 232px; height: 640px; flex: none; }
h3 { height: 32px; background: #edf1e0; border-bottom: 2px solid #ccc; font-size: 12.9px; font-weight: 700; line-height: 32px; padding-left: 16px; color: #555; letter-spacing: 0; }
h3.open { border-bottom-width: 1px; line-height: 33px; }
.items { height: 480px; padding-top: 3px; background: #fff; border: solid #c2c2c2; border-width: 1px 1px 1px 0; }
.items li { height: 33px; display: flex; align-items: center; padding-left: 14px; }
.items .i { width: 16px; height: 16px; margin: 2px 14px 0 0; }
.items .q { width: 12px; height: 12px; margin: 1px 15px 0 auto; }

.viewer { width: 641px; height: 640px; margin-left: 8px; flex: none; }
.stage { padding: 9px 0 0 149px; }
.opt { height: 20px; display: flex; align-items: center; color: #555; padding-top: 3px; }
.opt.off { color: #888; }
.opt .cb { margin: -4px 1px 0 0; }
.off .cb { opacity: .5; }
.cb { display: block; width: 12px; height: 12px; border: 1px solid #999; border-radius: 2px; background: linear-gradient(#f0f0f0, #dcdcdc); }
.cb.on::after { content: ""; display: block; width: 8px; height: 4px; margin: 1.500px 0 0 1px; border: solid #333; border-width: 0 0 2px 2px; transform: rotate(-48deg); }
.phone { width: 341px; height: 516px; margin-top: -1px; background: #000; }
.status { height: 29px; display: flex; justify-content: flex-end; align-items: center; padding-right: 8px; gap: 6px; color: #33b5e5; font-size: 15.5px; letter-spacing: .2px; }
.title { margin: 0 2px; height: 24px; background: #696969; color: #fff; font-weight: 700; line-height: 22px; padding-left: 12px; letter-spacing: 0; }
.body { margin: 0 2px; height: 423px; background: #d2e0a6; border-top: 1px solid #ccc; font-family: "Liberation Sans", Arial, sans-serif; letter-spacing: 0; }
.form { width: 320px; height: 422px; background: #fff; padding-top: 5px; }
.harr { width: 319px; height: 43px; border: 2px solid #000; background: #e8e8e8; display: flex; gap: 9px; padding: 3px 2px; }
.harr span { width: 97px; height: 27px; background: #d5d6d6; border-radius: 2px; box-shadow: 0 1px 1px #ccc; text-align: center; line-height: 27px; color: #222; }
.pick { height: 37px; line-height: 28px; text-align: center; color: #000; }
.map { position: relative; width: 320px; height: 332px; border: 2px solid #8fc202; }
.geo { width: 316px; height: 328px; }
.maplabel { font: 33.5px "Noto Sans", sans-serif; letter-spacing: 0; fill: #333; stroke: #fff; stroke-width: 6px; stroke-opacity: .8; paint-order: stroke; }
.ctl { position: absolute; left: 10px; top: 226px; width: 26px; background: #fff; border-radius: 3px; box-shadow: 0 1px 4px rgba(0,0,0,.6); }
.ctl svg { width: 26px; height: 27px; padding: 6px 5px; border-bottom: 1px solid #ccc; }
.ctl svg:last-child { border: 0; }
.attr { position: absolute; right: 0; bottom: 0; height: 16px; padding: 0 5px; background: rgba(255,255,255,.7); font-size: 11px; line-height: 16px; color: #333; white-space: nowrap; }
.attr a { color: #0078a8; }
.softkeys { width: 341px; height: 40px; }
.nonvis { width: 341px; padding-top: 7px; font-size: 13px; font-weight: 700; text-align: center; letter-spacing: 0; }
.nv { width: 341px; display: flex; gap: 29px; padding: 5px 0 0 95px; }
.nv svg { width: 16px; height: 16px; }
.nv svg:first-child { margin: 1px 5px 0 0; }

.col { margin-left: 8px; width: 214px; flex: none; }
.comps { height: 558px; }
.treebox { margin: 6px 0 0 6px; width: 200px; height: 480px; display: grid; grid-template: 463px 17px / 183px 17px; }
.tree { overflow: hidden; padding-top: 1px; }
.tree li { height: 27px; display: flex; align-items: flex-start; padding-top: 2px; }
.tree .e { width: 9px; height: 9px; margin: 7px 13px 0 0; }
.tree span { display: flex; align-items: flex-start; height: 26px; padding: 2px 5px 0 6px; margin-left: -6px; line-height: 22px; white-space: nowrap; }
.tree .i { width: 16px; height: 16px; margin-right: 2px; }
.tree .sel { background: #d2e0a6; }
.d0 { padding-left: 7px; } .d1 { padding-left: 23px; } .d2 { padding-left: 39px; } .d3 { padding-left: 55px; }
.vbar { width: 17px; height: 463px; background: #f1f1f1; }
.hbar { width: 183px; height: 17px; background: #f1f1f1; }
.corner { background: #dcdcdc; }
.btns { display: flex; justify-content: center; gap: 5px; padding: 4px 0 0 0; }
button { height: 25px; border: 1px solid #c0c0c0; border-radius: 3px; background: linear-gradient(#fff, #e2e2e2); font: 12px Roboto, sans-serif; color: #444; padding: 0 6px; box-shadow: 0 1px 1px #bbb; letter-spacing: .05px; }
.media { margin-top: 8px; height: 100px; border-top: 1px solid #ccc; }
.media h2 { height: 30px; line-height: 30px; }
.media p { padding: 9px 0 0 33px; height: 23px; }

.props { width: 214px; height: 640px; margin-left: 8px; flex: none; }
.sub { height: 33px; background: #edf1e0; border-bottom: 1px solid #ccc; padding-left: 10px; line-height: 33px; font-size: 13px; }
dl { padding: 9px 0 0 9px; }
dt { height: 16px; padding-left: 2px; letter-spacing: .08px; }
dd.t { height: 39px; } dd.c { height: 29px; padding: 4px 0 0 2px; } dd.s { height: 33px; }
dd.t div { width: 136px; height: 26px; border: 1px solid #ccc; border-radius: 4px; background: #fff; padding: 0 6px; line-height: 23px; font-size: 9.7px; letter-spacing: .05px; white-space: nowrap; }
dd.s div { width: 52px; height: 24px; border: 1px solid #ccc; border-radius: 3px; background: #fff; display: flex; align-items: center; gap: 5px; padding-left: 3px; }
.pagebar { width: 17px; height: 631px; margin-left: auto; }
```
